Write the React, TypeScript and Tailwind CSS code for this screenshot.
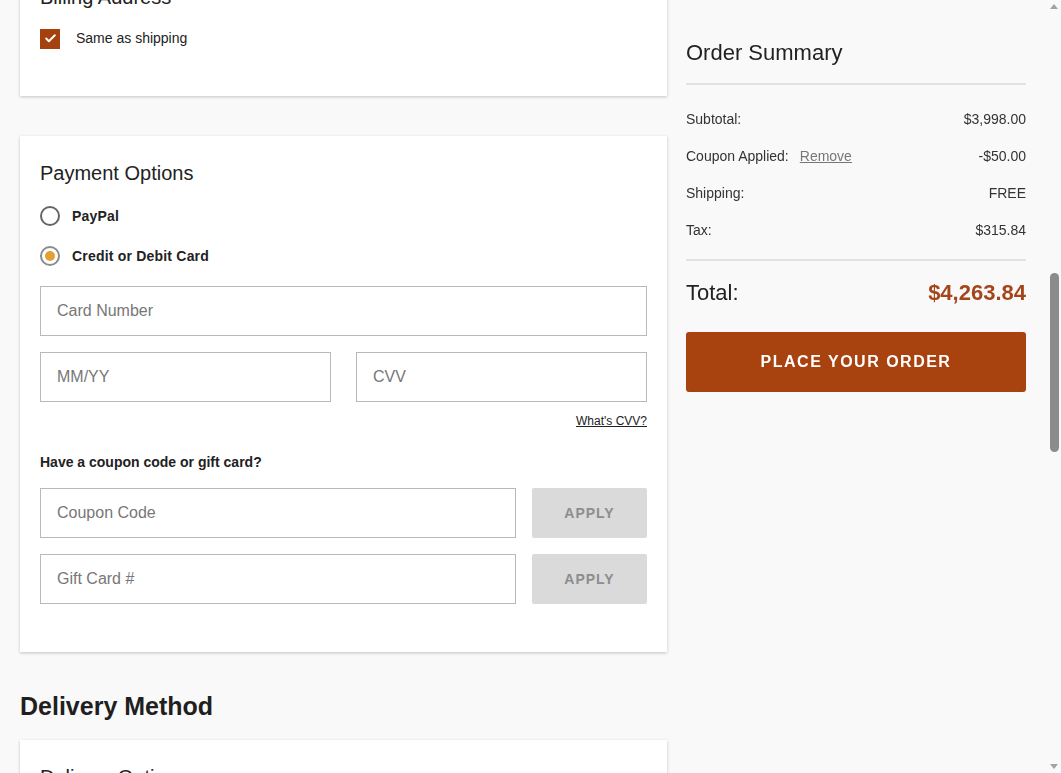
import { useLayoutEffect, useRef } from "react";
import { Check } from "lucide-react";

const FONT = { fontFamily: '"Liberation Sans", Arial, sans-serif' };

function Field({ placeholder, className = "" }: { placeholder: string; className?: string }) {
  return (
    <input
      placeholder={placeholder}
      className={`h-[50px] w-full border border-[#b9b9b9] bg-white px-4 text-[16px] text-[#333] placeholder:text-[#777] focus:outline-none ${className}`}
    />
  );
}

function Radio({ label, checked }: { label: string; checked?: boolean }) {
  return (
    <label className="flex h-5 items-center gap-3">
      <span
        className={`flex h-5 w-5 items-center justify-center rounded-full border-2 ${
          checked ? "border-[#8c8c8c]" : "border-[#666]"
        } bg-white`}
      >
        {checked && <span className="h-[10px] w-[10px] rounded-full bg-[#e3a133]" />}
      </span>
      <span className="text-[14px] font-bold tracking-[0.2px] text-[#222]">{label}</span>
    </label>
  );
}

function Card({
  title,
  children,
  innerRef,
  className = "pb-12",
}: {
  title: string;
  children?: React.ReactNode;
  innerRef?: React.Ref<HTMLDivElement>;
  className?: string;
}) {
  return (
    <div ref={innerRef} className={`bg-white px-5 pt-[25px] shadow-[0_1px_3px_rgba(0,0,0,0.22)] ${className}`}>
      <h3 className="text-[20px] leading-6 text-[#222]">{title}</h3>
      {children}
    </div>
  );
}

function SectionTitle({ children }: { children: React.ReactNode }) {
  return <h2 className="mb-[19px] mt-[39px] text-[25px] font-bold leading-[30px] text-[#1f1f1f]">{children}</h2>;
}

function SummaryRow({ label, value, extra }: { label: string; value: string; extra?: React.ReactNode }) {
  return (
    <div className="flex h-[17px] items-center justify-between text-[14px] text-[#333]">
      <span className="flex items-center gap-[11px]">
        {label}
        {extra}
      </span>
      <span>{value}</span>
    </div>
  );
}

// drawn scrollbar, the headless browser hides the native one
function ScrollBar() {
  return (
    <div className="flex w-[14px] shrink-0 flex-col items-center bg-[#f9f9f9]">
      <svg width="8" height="5" viewBox="0 0 8 5" className="mt-[4px]">
        <path d="M0 5 L4 0 L8 5 Z" fill="#a3a3a3" />
      </svg>
      <div className="mt-[264px] h-[179px] w-[9px] rounded-full bg-[#8b8b8b]" />
      <div className="flex-1" />
      <svg width="8" height="5" viewBox="0 0 8 5" className="mb-[4px]">
        <path d="M0 0 L4 5 L8 0 Z" fill="#a3a3a3" />
      </svg>
    </div>
  );
}

export default function App() {
  const scroller = useRef<HTMLDivElement>(null);
  const billing = useRef<HTMLDivElement>(null);

  // page is shown scrolled down to the billing/payment part
  useLayoutEffect(() => {
    const el = scroller.current;
    const b = billing.current;
    if (!el || !b) return;
    el.scrollTop = b.getBoundingClientRect().top - el.getBoundingClientRect().top + 40;
  }, []);

  return (
    <div style={FONT} className="flex h-screen bg-[#f9f9f9]">
      <div
        ref={scroller}
        className="flex-1 overflow-y-scroll [scrollbar-width:none] [&::-webkit-scrollbar]:hidden"
      >
        <header className="flex h-[100px] items-center border-b border-[#e2e2e2] bg-white px-5">
          <span className="text-[26px] font-bold tracking-[2px] text-[#a8420f]">CHECKOUT</span>
        </header>

        <div className="grid grid-cols-[647px_340px] gap-x-[19px] px-5 pb-24">
          <main className="pt-[1px]">
            <SectionTitle>Shipping Information</SectionTitle>
            <Card title="Contact Information">
              <div className="mt-5 flex flex-col gap-4">
                <Field placeholder="Email Address" />
                <Field placeholder="Phone Number" />
              </div>
            </Card>

            <div className="mt-10">
              <Card title="Shipping Address">
                <div className="mt-5 flex flex-col gap-4">
                  <div className="grid grid-cols-2 gap-[25px]">
                    <Field placeholder="First Name" />
                    <Field placeholder="Last Name" />
                  </div>
                  <Field placeholder="Street Address" />
                  <Field placeholder="Apt, Suite, etc. (optional)" />
                  <Field placeholder="City" />
                  <div className="grid grid-cols-2 gap-[25px]">
                    <Field placeholder="State" />
                    <Field placeholder="ZIP Code" />
                  </div>
                  <Field placeholder="Country" />
                </div>
              </Card>
            </div>

            <SectionTitle>Payment Method</SectionTitle>
            <Card title="Billing Address" innerRef={billing} className="pb-[47px]">
              <label className="mt-[19px] flex items-center gap-4">
                <span className="flex h-5 w-5 items-center justify-center bg-[#a5400f]">
                  <Check size={13} strokeWidth={3.5} className="text-white" />
                </span>
                <span className="text-[14px] text-[#222]">Same as shipping</span>
              </label>
            </Card>

            <div className="mt-10">
              <Card title="Payment Options">
                <div className="mt-[21px] flex flex-col gap-5">
                  <Radio label="PayPal" />
                  <Radio label="Credit or Debit Card" checked />
                </div>
                <div className="mt-5 flex flex-col gap-4">
                  <Field placeholder="Card Number" />
                  <div className="grid grid-cols-2 gap-[25px]">
                    <Field placeholder="MM/YY" />
                    <Field placeholder="CVV" />
                  </div>
                </div>
                <div className="mt-[12px] flex justify-end">
                  <a className="text-[12px] leading-[14px] text-[#222] underline">What's CVV?</a>
                </div>
                <p className="mt-[26px] text-[14px] font-bold leading-[16px] text-[#222]">Have a coupon code or gift card?</p>
                <div className="mt-[18px] flex flex-col gap-4">
                  {["Coupon Code", "Gift Card #"].map((p) => (
                    <div key={p} className="flex gap-4">
                      <Field placeholder={p} className="flex-1" />
                      <button className="h-[50px] w-[115px] shrink-0 rounded-[2px] bg-[#dadada] text-[14px] font-bold tracking-[1px] text-[#8d8d8d]">
                        APPLY
                      </button>
                    </div>
                  ))}
                </div>
              </Card>
            </div>

            <SectionTitle>Delivery Method</SectionTitle>
            <Card title="Delivery Options">
              <div className="mt-[21px] flex flex-col gap-5">
                <Radio label="Standard Delivery (5-7 business days) - FREE" checked />
                <Radio label="Expedited Delivery (2-3 business days) - $49.00" />
                <Radio label="White Glove Delivery & Setup - $199.00" />
              </div>
            </Card>

            <SectionTitle>Review Your Items</SectionTitle>
            <Card title="Items in Your Order (2)">
              <div className="mt-5 flex flex-col gap-4">
                {["Leather Sofa, Cognac", "Leather Loveseat, Cognac"].map((n) => (
                  <div key={n} className="flex gap-4 border-b border-[#e5e5e5] pb-4">
                    <div className="h-[110px] w-[110px] bg-[#ececec]" />
                    <div className="flex flex-col gap-2 text-[14px] text-[#333]">
                      <span className="font-bold">{n}</span>
                      <span>Qty: 1</span>
                      <span>$1,999.00</span>
                    </div>
                  </div>
                ))}
              </div>
            </Card>
          </main>

          <aside className="sticky top-0 self-start pt-[40px]">
            <h2 className="text-[22px] leading-[26px] text-[#222]">Order Summary</h2>
            <div className="mt-[17px] h-[2px] bg-[#e3e3e3]" />
            <div className="mt-[26px] flex flex-col gap-5">
              <SummaryRow label="Subtotal:" value="$3,998.00" />
              <SummaryRow
                label="Coupon Applied:"
                value="-$50.00"
                extra={<a className="text-[#777] underline">Remove</a>}
              />
              <SummaryRow label="Shipping:" value="FREE" />
              <SummaryRow label="Tax:" value="$315.84" />
            </div>
            <div className="mt-[20px] h-[2px] bg-[#e3e3e3]" />
            <div className="mt-[19px] flex items-center justify-between leading-[26px]">
              <span className="text-[22px] text-[#222]">Total:</span>
              <span className="text-[22px] font-bold text-[#a5451a]">$4,263.84</span>
            </div>
            <button className="mt-[26px] h-[60px] w-full rounded-[3px] bg-[#a8420f] text-[16px] font-bold tracking-[1.5px] text-white">
              PLACE YOUR ORDER
            </button>
          </aside>
        </div>

        <footer className="border-t border-[#e2e2e2] bg-white px-5 py-16 text-[13px] text-[#666]">
          <p>Secure checkout. All transactions are encrypted.</p>
          <p className="mt-3">Questions? Call 1-800-555-0199</p>
        </footer>
      </div>
      <ScrollBar />
    </div>
  );
}
